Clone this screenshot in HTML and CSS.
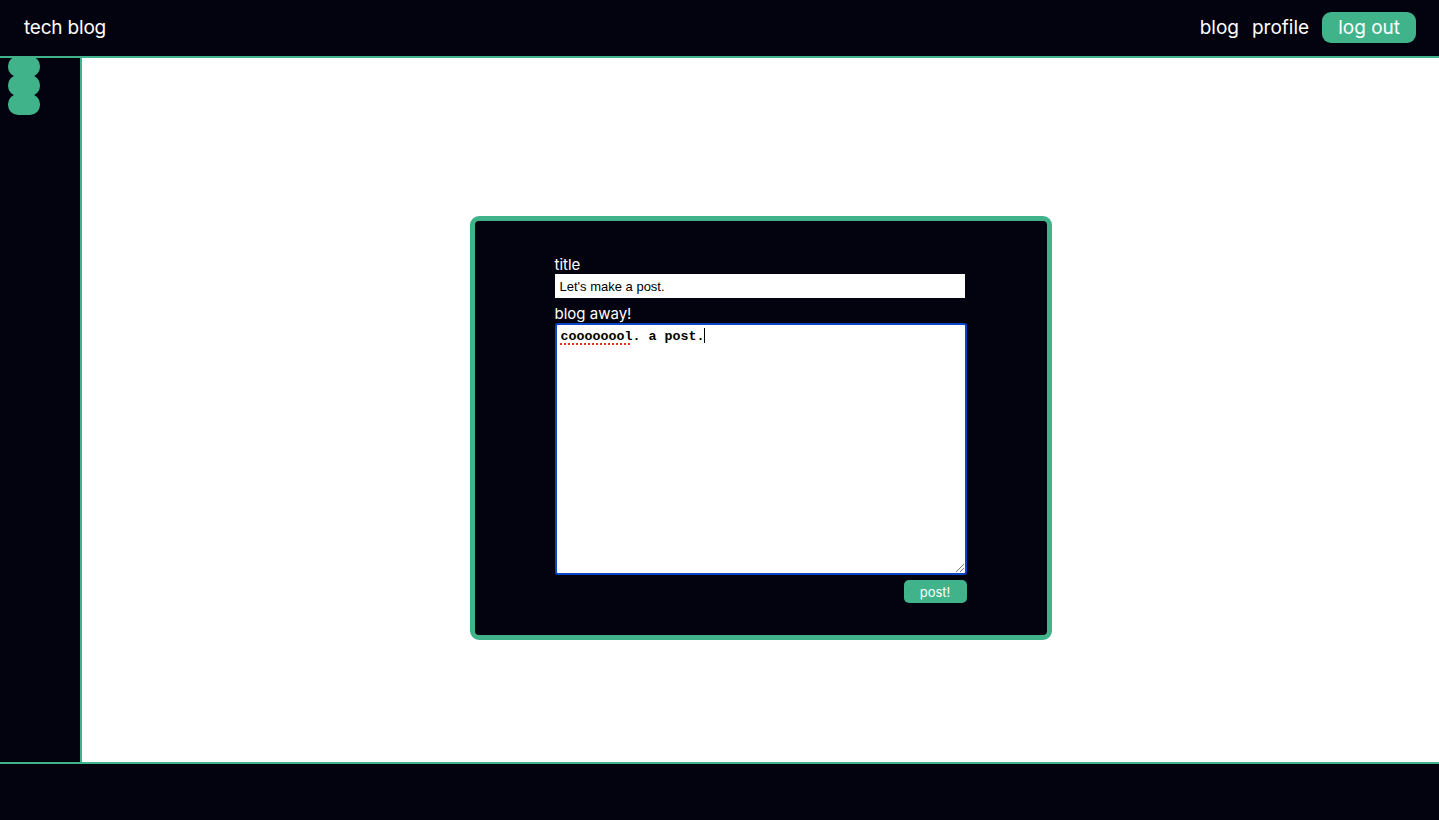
FILE: index.html
```html
<!DOCTYPE html>
<html>
<head>
<meta charset="utf-8">
<link rel="stylesheet" href="styles.css">
</head>
<body>
<header class="topbar">
  <div class="brand">tech blog</div>
  <nav class="nav">
    <a class="nav-link">blog</a>
    <a class="nav-link">profile</a>
    <a class="nav-btn">log out</a>
  </nav>
</header>
<div class="body">
  <aside class="sidebar">
    <div class="blob"></div>
    <div class="blob"></div>
    <div class="blob"></div>
  </aside>
  <main class="main">
    <div class="card">
      <form class="form">
        <label class="label">title</label>
        <input class="input" type="text" value="Let's make a post.">
        <label class="label label2">blog away!</label>
        <div class="textarea"><span class="spell">coooooool</span>. a post.<span class="caret"></span><span class="grip"></span></div>
        <div class="actions"><button class="post-btn" type="button">post!</button></div>
      </form>
    </div>
  </main>
</div>
<footer class="footer"></footer>
</body>
</html>
```
FILE: styles.css
```css
* { box-sizing: border-box; }
html, body { margin: 0; padding: 0; }
body {
  width: 1439px;
  height: 820px;
  background: #03020f;
  font-family: "Inter", "DejaVu Sans", sans-serif;
  color: #fff;
  display: flex;
  flex-direction: column;
  overflow: hidden;
}
.topbar {
  height: 58px;
  border-bottom: 2px solid #41b38a;
  display: flex;
  align-items: center;
  justify-content: space-between;
  padding: 0 23px 2px 24px;
}
.brand { font-size: 19px; letter-spacing: -0.2px; }
.nav { display: flex; align-items: center; gap: 13px; }
.nav-link { font-size: 19px; color: #fff; }
.nav-btn {
  font-size: 19px;
  background: #41b38a;
  color: #fff;
  border-radius: 9px;
  height: 31px;
  padding: 0 16px;
  display: flex;
  align-items: center;
}
.body { display: flex; height: 704px; }
.sidebar {
  width: 82px;
  border-right: 2px solid #41b38a;
  padding: 0 0 0 8px;
  display: flex;
  flex-direction: column;
}
.blob {
  width: 32px;
  height: 21px;
  background: #41b38a;
  border-radius: 10px;
  margin-bottom: -2px;
}
.blob:first-child { margin-top: -2px; }
.main {
  flex: 1;
  background: #fff;
  display: flex;
  justify-content: center;
  align-items: flex-start;
  padding-top: 158px;
}
.card {
  width: 582px;
  height: 424px;
  background: #03020f;
  border: 5px solid #41b38a;
  border-radius: 9px;
  padding: 35px 0 0 80px;
}
.form { width: 412px; display: flex; flex-direction: column; }
.label { font-size: 15px; line-height: 18px; color: #fff; }
.label2 { margin-top: 7px; }
.input {
  width: 410px;
  height: 24px;
  border: none;
  outline: none;
  padding: 0 5px;
  font-family: "Liberation Sans", Arial, sans-serif;
  font-size: 13px;
  color: #000;
  background: #fff;
}
.textarea {
  position: relative;
  width: 412px;
  height: 252px;
  background: #fff;
  border: 2px solid #0a45c7;
  border-radius: 3px;
  padding: 3px 4px;
  font-family: "Liberation Mono", "Courier New", monospace;
  font-size: 13.33px;
  line-height: 16px;
  color: #000;
  font-weight: bold;
}
.spell {
  text-decoration-line: underline;
  text-decoration-style: dotted;
  text-decoration-color: #e0321e;
  text-decoration-thickness: 2px;
  text-underline-offset: 3px;
}
.caret {
  display: inline-block;
  width: 1px;
  height: 15px;
  background: #000;
  vertical-align: -3px;
}
.grip {
  position: absolute;
  right: 1px;
  bottom: 1px;
  width: 8px;
  height: 8px;
  background: linear-gradient(135deg, transparent 45%, #777 45%, #777 52%, transparent 52%, transparent 70%, #777 70%, #777 77%, transparent 77%);
}
.actions { display: flex; justify-content: flex-end; margin-top: 5px; }
.post-btn {
  width: 63px;
  height: 23px;
  background: #41b38a;
  border: none;
  border-radius: 5px;
  color: #fff;
  font-family: "Inter", "DejaVu Sans", sans-serif;
  font-size: 13px;
  padding: 0;
}
.footer {
  flex: 1;
  border-top: 2px solid #41b38a;
  background: #03020f;
}
```
